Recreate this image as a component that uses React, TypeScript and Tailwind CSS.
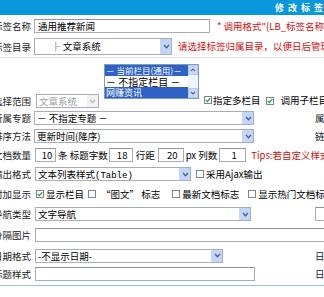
import type { ReactNode } from 'react'

const font = "font-['Noto_Sans_CJK_SC','Noto_Sans',sans-serif]"

function Arrow() {
  return (
    <span className="flex w-[11px] shrink-0 items-center justify-center border-l border-[#c9d7f5] bg-[#c3d5fb]">
      <svg viewBox="0 0 8 6" className="h-[5px] w-[7px]">
        <path d="M1 1.2 L4 4.4 L7 1.2" fill="none" stroke="#4a5f8c" strokeWidth="1.6" />
      </svg>
    </span>
  )
}

function Select({ className, children, disabled }: { className: string; children?: ReactNode; disabled?: boolean }) {
  return (
    <div className={`flex h-[14px] shrink-0 border border-[#a7aeb8] bg-white ${className}`}>
      <span
        className={`flex-1 overflow-hidden whitespace-nowrap pl-[2px] leading-[12px] ${disabled ? 'text-[#a0a0a0]' : 'text-black'}`}
      >
        {children}
      </span>
      {disabled ? (
        <span className="flex w-[11px] shrink-0 items-center justify-center bg-[#f2f2f2]">
          <svg viewBox="0 0 8 6" className="h-[5px] w-[7px]">
            <path d="M1 1.2 L4 4.4 L7 1.2" fill="none" stroke="#b8b8b8" strokeWidth="1.4" />
          </svg>
        </span>
      ) : (
        <Arrow />
      )}
    </div>
  )
}

function Input({ className, children }: { className: string; children?: ReactNode }) {
  return (
    <div
      className={`h-[14px] shrink-0 overflow-hidden whitespace-nowrap border border-[#a7aeb8] border-t-[#8c949e] bg-white pl-[3px] leading-[12px] ${className}`}
    >
      {children}
    </div>
  )
}

function Check({ on }: { on?: boolean }) {
  return (
    <span className="inline-flex h-[8px] w-[8px] shrink-0 items-center justify-center border border-[#7a8796] bg-white">
      {on && (
        <svg viewBox="0 0 8 8" className="h-[6px] w-[6px]">
          <path d="M1 4 L3.2 6.2 L7 1.6" fill="none" stroke="#1f9a2a" strokeWidth="1.5" />
        </svg>
      )}
    </span>
  )
}

function Row({
  label,
  className = 'h-[18px] items-center',
  right,
  children,
}: {
  label: string
  className?: string
  right?: ReactNode
  children?: ReactNode
}) {
  return (
    <div className={`flex ${className}`}>
      <div className="w-[45px] shrink-0 pr-[3px] text-right leading-[12px] text-[#1a1a1a]">{label}</div>
      <div className="flex w-[281px] shrink-0 items-center whitespace-nowrap">{children}</div>
      {right}
    </div>
  )
}

function RightLabel({ text }: { text: string }) {
  return <div className="whitespace-nowrap leading-[12px] text-[#1a1a1a]">{text}</div>
}

export default function App() {
  return (
    <div className={`h-[297px] w-[324px] overflow-hidden bg-white text-[9.5px] ${font}`}>
      <div className="flex h-[15px] items-center bg-[#0996dc] pl-[275px] text-[9px] font-bold tracking-[4px] whitespace-nowrap text-white">
        修改标签属性
      </div>

      <div className="ml-[-11px] w-[400px]">
        <Row label="标签名称" className="h-[21px] items-center pt-[1px]">
          <Input className="w-[176px]">通用推荐新闻</Input>
          <span className="ml-[7px] text-[#cc1010]">* 调用格式"{'{'}LB_标签名称{'}'}"</span>
        </Row>

        <Row label="标签目录" className="h-[21px] items-center">
          <Select className="h-[17px] w-[138px]">
            <span className="pl-[14px] leading-[15px]">├ 文章系统</span>
          </Select>
          <span className="ml-[6px] text-[#cc1010]">请选择标签归属目录，以便日后管理标签</span>
        </Row>

        <div className="h-px w-[400px] bg-[#e2e2e2]" />

        <div className="flex h-[51px] items-start">
          <div className="mt-[37px] w-[45px] shrink-0 pr-[3px] text-right leading-[12px] text-[#1a1a1a]">选择范围</div>
          <div className="mt-[36px] ml-[2px]">
            <Select disabled className="w-[63px]">
              文章系统
            </Select>
          </div>
          <div className="mt-[6px] ml-[5px] flex h-[35px] w-[95px] shrink-0 border border-[#7f9db9] bg-white">
            <div className="flex-1 overflow-hidden whitespace-nowrap">
              <div className="h-[11px] bg-[#2f62c4] pl-[1px] text-[8.5px] leading-[11px] text-white">－ 当前栏目(通用)－</div>
              <div className="h-[11px] pl-[1px] text-[10px] leading-[11px] text-black">－ 不指定栏目 －</div>
              <div className="h-[11px] bg-[#2f62c4] pl-[1px] text-[9px] leading-[11px] text-white">网赚资讯</div>
            </div>
            <div className="flex w-[10px] flex-col justify-between bg-[#f1f4fb]">
              <span className="flex h-[10px] items-center justify-center border border-[#b5c8ef] bg-[#c8d9fb]">
                <svg viewBox="0 0 8 6" className="h-[4px] w-[6px]">
                  <path d="M1 4.6 L4 1.4 L7 4.6" fill="none" stroke="#4a5f8c" strokeWidth="1.6" />
                </svg>
              </span>
              <span className="flex h-[10px] items-center justify-center border border-[#b5c8ef] bg-[#c8d9fb]">
                <svg viewBox="0 0 8 6" className="h-[4px] w-[6px]">
                  <path d="M1 1.4 L4 4.6 L7 1.4" fill="none" stroke="#4a5f8c" strokeWidth="1.6" />
                </svg>
              </span>
            </div>
          </div>
          <div className="mt-[36px] ml-[5px] flex items-center whitespace-nowrap leading-[12px]">
            <Check on />
            <span className="ml-[1px]">指定多栏目</span>
            <span className="ml-[5px]">
              <Check on />
            </span>
            <span className="ml-[7px]">调用子栏目</span>
          </div>
        </div>

        <Row label="所属专题" right={<RightLabel text="属性" />}>
          <Select className="w-[220px]">－ 不指定专题 －</Select>
        </Row>

        <Row label="排序方法" right={<RightLabel text="链接" />}>
          <Select className="w-[220px]">更新时间(降序)</Select>
        </Row>

        <Row label="文档数量" className="h-[20px] items-center">
          <Input className="ml-px w-[21px] pl-0 text-center">10</Input>
          <span className="ml-[2px]">条 标题字数</span>
          <Input className="ml-[1px] w-[24px] pl-0 text-center">18</Input>
          <span className="ml-[3px]">行距</span>
          <Input className="ml-[3px] w-[26px] pl-0 text-center">20</Input>
          <span className="ml-[2px]">px 列数</span>
          <Input className="ml-[2px] w-[27px] pl-0 text-center">1</Input>
          <span className="ml-[5px] text-[#cc1010]">Tips:若自定义样式输出</span>
        </Row>

        <Row label="输出格式">
          <Select className="ml-px w-[156px]">
            文本列表样式<span className="font-['Liberation_Mono',monospace] text-[9px]">(Table)</span>
          </Select>
          <span className="ml-[5px] flex items-center">
            <Check />
            <span className="ml-[2px]">采用Ajax输出</span>
          </span>
        </Row>

        <Row label="附加显示" className="h-[22px] items-center">
          <span className="ml-[2px] flex items-center">
            <Check on />
            <span className="ml-[2px]">显示栏目</span>
          </span>
          <span className="ml-[4px] flex items-center">
            <Check />
            <span className="ml-[5px]">“图文” 标志</span>
          </span>
          <span className="ml-[12px] flex items-center">
            <Check />
            <span className="ml-[2px]">最新文档标志</span>
          </span>
          <span className="ml-[9px] flex items-center">
            <Check />
            <span className="ml-[2px]">显示热门文档标志</span>
          </span>
        </Row>

        <Row label="导航类型" right={<Input className="w-[30px]" />}>
          <Select className="ml-px w-[216px]">文字导航</Select>
        </Row>

        <Row label="分隔图片" className="h-[24px] items-center">
          <Input className="ml-px w-[320px]" />
        </Row>

        <Row label="日期格式" className="h-[17px] items-center" right={<RightLabel text="日期" />}>
          <Select className="ml-px w-[188px]">-不显示日期-</Select>
        </Row>

        <Row label="标题样式" className="h-[19px] items-center" right={<RightLabel text="日期" />}>
          <Input className="ml-px w-[220px]" />
        </Row>

        <div className="mt-[2px] h-px w-[400px] bg-[#8fc3d3]" />
      </div>
    </div>
  )
}
